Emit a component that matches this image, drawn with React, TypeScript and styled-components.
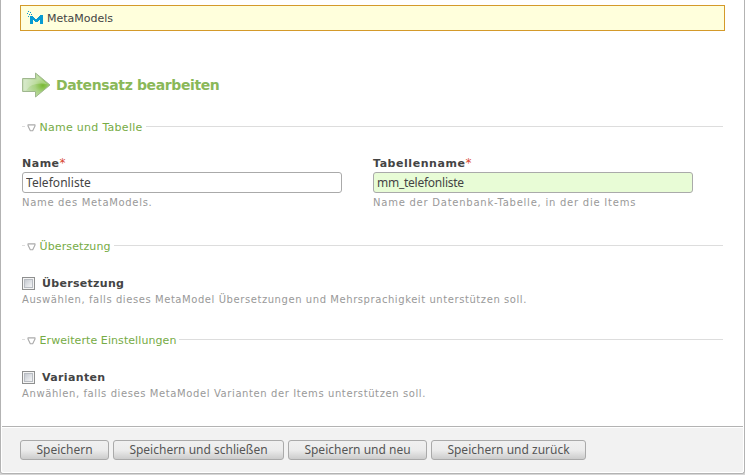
import React from "react";
import styled, { createGlobalStyle } from "styled-components";

const Global = createGlobalStyle`
  * { box-sizing: border-box; }
  html, body { margin: 0; padding: 0; background: #d6d6d6; overflow: hidden; }
  body { font-family: "DejaVu Sans", Verdana, sans-serif; font-size: 11px; color: #444; }
`;

const Panel = styled.main`
  width: 745px;
  height: 474px;
  display: flex;
  flex-direction: column;
  background: #fff;
  border: 1px solid #b3b3b3;
  border-top: 0;
  border-radius: 0 0 3px 3px;
`;

const Content = styled.div`
  height: 426px;
  padding: 5px 19px 0;
`;

const Notice = styled.div`
  height: 26px;
  display: flex;
  align-items: center;
  gap: 4px;
  padding-left: 6px;
  border: 1px solid #d49a2a;
  background: #ffffdc;
`;

const Heading = styled.h1`
  display: flex;
  align-items: center;
  gap: 5px;
  height: 28px;
  margin: 40px 0 21px 2px;
  font-size: 14px;
  line-height: 28px;
  color: #8ab858;
`;

const Section = styled.section<{ $height: number }>`
  height: ${(p) => p.$height}px;
  margin: 0 2px;
`;

const Legend = styled.div`
  display: flex;
  align-items: center;
  height: 14px;
  color: #76ab45;

  &::before {
    content: "";
    width: 3px;
    height: 1px;
    background: #ddd;
    margin: -1px 2px 0 0;
  }
  &::after {
    content: "";
    flex: 1;
    height: 1px;
    margin: -1px 0 0 3px;
    background: #ddd;
  }
  svg { flex: none; margin: 1px 4px 0 -0.5px; }
`;

const Spaced = styled.span<{ $spacing?: number }>`
  letter-spacing: ${(p) => p.$spacing ?? 0}px;
  white-space: nowrap;
`;

const Fields = styled.div`
  display: grid;
  grid-template-columns: 320px 320px;
  column-gap: 31px;
  margin-top: 22px;
`;

const Label = styled.label<{ $spacing?: number }>`
  display: block;
  height: 14px;
  line-height: 14px;
  font-weight: bold;
  letter-spacing: ${(p) => p.$spacing ?? 0.3}px;
  white-space: nowrap;
`;

const Required = styled.span`
  color: #d8452f;
  font-size: 12px;
  font-weight: normal;
`;

const Input = styled.input<{ $valid?: boolean }>`
  display: block;
  width: 320px;
  height: 21px;
  margin: 2px 0 0;
  padding: 0 3px 1px;
  border: 1px solid #aaa;
  border-radius: 3px;
  outline: 0;
  background: ${(p) => (p.$valid ? "#e8fcd6" : "#fff")};
  color: #444;
  font-family: "Noto Sans", sans-serif;
  font-size: 12px;
  letter-spacing: ${(p) => (p.$valid ? -0.25 : 0.05)}px;
`;

const Help = styled.p<{ $spacing?: number }>`
  height: 14px;
  margin: 3px 0 0;
  font-size: 10px;
  line-height: 14px;
  letter-spacing: ${(p) => p.$spacing ?? 0.57}px;
  color: #999;
  white-space: nowrap;
`;

const Option = styled.div`
  margin-top: 23px;
`;

const OptionLabel = styled(Label)`
  display: flex;
  align-items: flex-start;
  gap: 7px;
  line-height: 16px;
`;

const Checkbox = styled.input.attrs({ type: "checkbox" })`
  appearance: none;
  width: 13px;
  height: 13px;
  margin: 1px 0 0;
  padding: 2px;
  border: 1px solid #8e8f8f;
  background: linear-gradient(135deg, #c6cad1, #f4f5f6) content-box, #f4f4f4;
  box-shadow: inset 0 0 0 1px #f4f4f4, inset 0 0 0 2px #b8bcc2;
`;

const Footer = styled.footer`
  flex: 1;
  display: flex;
  gap: 4px;
  padding: 12px 18px 0;
  background: #f2f2f2;
  border: 1px solid #fff;
  border-radius: 0 0 3px 3px;
`;

const Divider = styled.div`
  height: 1px;
  margin: 0 1px;
  background: #b3b3b3;
`;

const Button = styled.button<{ $width: number }>`
  width: ${(p) => p.$width}px;
  height: 20px;
  padding: 0;
  border: 1px solid #aaa;
  border-radius: 3px;
  background: linear-gradient(#f0f0f0 0%, #ececec 50%, #cccccc 100%);
  color: #555;
  font-family: "Noto Sans", sans-serif;
  font-size: 12px;
  line-height: 18px;
  white-space: nowrap;
`;

const Triangle = () => (
  <svg width="9" height="8" viewBox="0 0 9 8">
    <path d="M1 .9H8V2L5.7 6.8H3.3L1 2Z" fill="#fff" stroke="#aaa" strokeWidth="1.1" strokeLinejoin="round" />
  </svg>
);

const Arrow = () => (
  <svg width="29" height="26" viewBox="0 0 29 26">
    <defs>
      <radialGradient id="arrow" cx="0.74" cy="0.52" r="0.65">
        <stop offset="0" stopColor="#78b832" />
        <stop offset="0.45" stopColor="#a9d282" />
        <stop offset="1" stopColor="#c7e0b5" />
      </radialGradient>
    </defs>
    <path d="M.6 6.5H13.5V1L28 13 13.5 25V19.5H.6Z" fill="url(#arrow)" stroke="#9fb78e" />
    <path d="M1.5 7.5H14.5V3.2L25 12Q9 10 4 18.5H1.5Z" fill="#fff" opacity=".25" />
  </svg>
);

const Logo = () => (
  <svg width="16" height="14" viewBox="0 0 16 14" shapeRendering="crispEdges">
    <path d="M3 13V5h3v1h1v1h1v1h2V7h1V6h1V5h1V4h3v9h-3V9h-1v1h-1v1H8v-1H7V9H6v4Z" fill="#079bd2" />
    <path d="M1 0h1v1H1ZM3 1h1v1H3ZM0 2h1v1H0ZM2 3h1v1H2ZM4 3h1v1H4ZM1 5h1v1H1Z" fill="#079bd2" />
  </svg>
);

export default function App() {
  return (
    <>
      <Global />
      <Panel>
        <Content>
          <Notice><Logo /><Spaced>MetaModels</Spaced></Notice>
          <Heading><Arrow /><Spaced $spacing={-0.38}>Datensatz bearbeiten</Spaced></Heading>
          <Section $height={119}>
            <Legend><Triangle /><Spaced $spacing={0.28}>Name und Tabelle</Spaced></Legend>
            <Fields>
              <div>
                <Label $spacing={0.5}>Name<Required>*</Required></Label>
                <Input defaultValue="Telefonliste" />
                <Help $spacing={0.68}>Name des MetaModels.</Help>
              </div>
              <div>
                <Label $spacing={0.55}>Tabellenname<Required>*</Required></Label>
                <Input $valid defaultValue="mm_telefonliste" />
                <Help $spacing={0.76}>Name der Datenbank-Tabelle, in der die Items</Help>
              </div>
            </Fields>
          </Section>
          <Section $height={94}>
            <Legend><Triangle /><Spaced $spacing={0.12}>Übersetzung</Spaced></Legend>
            <Option>
              <OptionLabel><Checkbox />Übersetzung</OptionLabel>
              <Help>Auswählen, falls dieses MetaModel Übersetzungen und Mehrsprachigkeit unterstützen soll.</Help>
            </Option>
          </Section>
          <Section $height={80}>
            <Legend><Triangle /><Spaced $spacing={0.08}>Erweiterte Einstellungen</Spaced></Legend>
            <Option>
              <OptionLabel $spacing={0.35}><Checkbox />Varianten</OptionLabel>
              <Help $spacing={0.6}>Anwählen, falls dieses MetaModel Varianten der Items unterstützen soll.</Help>
            </Option>
          </Section>
        </Content>
        <Divider />
        <Footer>
          <Button $width={89}>Speichern</Button>
          <Button $width={171}>Speichern und schließen</Button>
          <Button $width={139}>Speichern und neu</Button>
          <Button $width={155}>Speichern und zurück</Button>
        </Footer>
      </Panel>
    </>
  );
}
